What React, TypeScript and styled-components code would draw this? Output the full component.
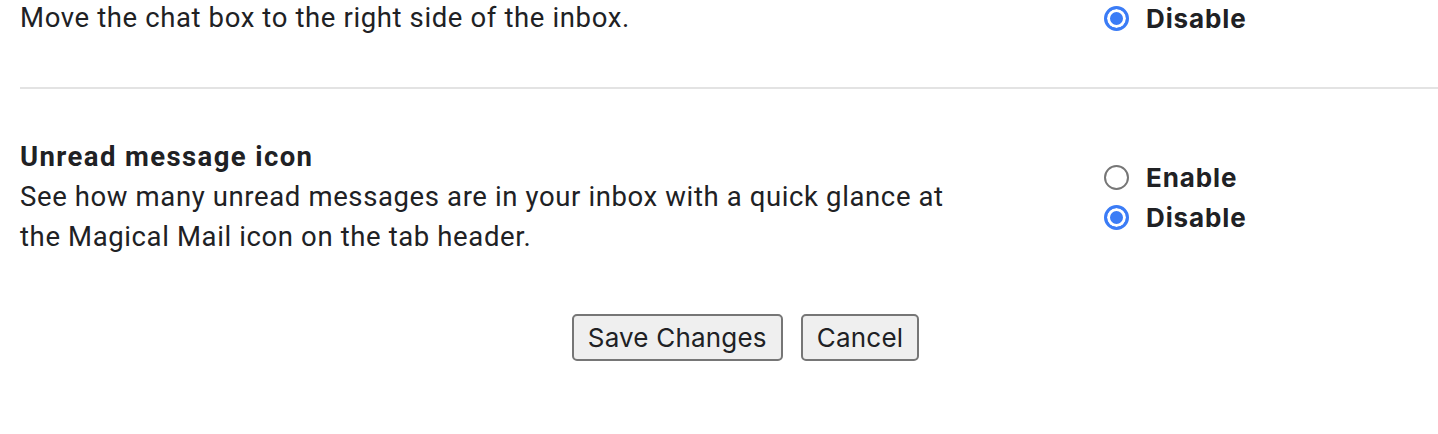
import * as React from 'react';
import styled, { createGlobalStyle } from 'styled-components';

const GlobalStyle = createGlobalStyle`
  html, body {
    margin: 0;
    padding: 0;
    background: #ffffff;
    overflow: hidden;
  }
  body {
    font-family: Roboto, "Liberation Sans", sans-serif;
    color: #202124;
  }
`;

const Page = styled.div`
  width: 1438px;
  margin-top: -2px;
`;

const Section = styled.div<{ $first?: boolean }>`
  display: flex;
  align-items: center;
  margin-left: 20px;
  padding: ${p => (p.$first ? '0 0 49px' : '48px 0 0')};
  border-bottom: ${p => (p.$first ? '2px solid #e3e3e3' : 'none')};
`;

const Info = styled.div`
  flex: 0 0 1084px;
  font-size: 27.5px;
  line-height: 40px;
  letter-spacing: 0.62px;
`;

const Desc = styled.div`
  max-width: 945px;
`;

const Title = styled.div`
  font-weight: 700;
  letter-spacing: 1.4px;
`;

const Options = styled.div`
  display: flex;
  flex-direction: column;
`;

const Option = styled.label`
  display: flex;
  align-items: center;
  gap: 17px;
  height: 40px;
  font-family: Inter, "Liberation Sans", sans-serif;
  font-weight: 700;
  font-size: 26px;
  color: #202124;
  letter-spacing: 0.9px;
`;

const Radio = styled.span<{ $on?: boolean }>`
  box-sizing: border-box;
  width: 25px;
  height: 25px;
  border-radius: 50%;
  border: ${p => (p.$on ? '3px solid #3b7cf6' : '2px solid #767676')};
  background: ${p => (p.$on ? '#3b7cf6' : '#fff')};
  box-shadow: ${p => (p.$on ? 'inset 0 0 0 3px #fff' : 'none')};
`;

const Actions = styled.div`
  display: flex;
  justify-content: center;
  gap: 18px;
  padding: 57px 0 0 53px;
`;

const Button = styled.button`
  box-sizing: border-box;
  height: 47px;
  padding: 0 14px;
  font-family: Inter, "Liberation Sans", sans-serif;
  font-size: 26px;
  letter-spacing: 0.2px;
  color: #202124;
  background: #efefef;
  border: 2px solid #767676;
  border-radius: 5px;
`;

export default function App() {
  return (
    <>
      <GlobalStyle />
      <Page>
        <Section $first>
          <Info>
            <Desc>Move the chat box to the right side of the inbox.</Desc>
          </Info>
          <Options>
            <Option><Radio $on />Disable</Option>
          </Options>
        </Section>
        <Section>
          <Info>
            <Title>Unread message icon</Title>
            <Desc>
              See how many unread messages are in your inbox with a quick glance at the Magical
              Mail icon on the tab header.
            </Desc>
          </Info>
          <Options>
            <Option><Radio />Enable</Option>
            <Option><Radio $on />Disable</Option>
          </Options>
        </Section>
        <Actions>
          <Button>Save Changes</Button>
          <Button>Cancel</Button>
        </Actions>
      </Page>
    </>
  );
}
